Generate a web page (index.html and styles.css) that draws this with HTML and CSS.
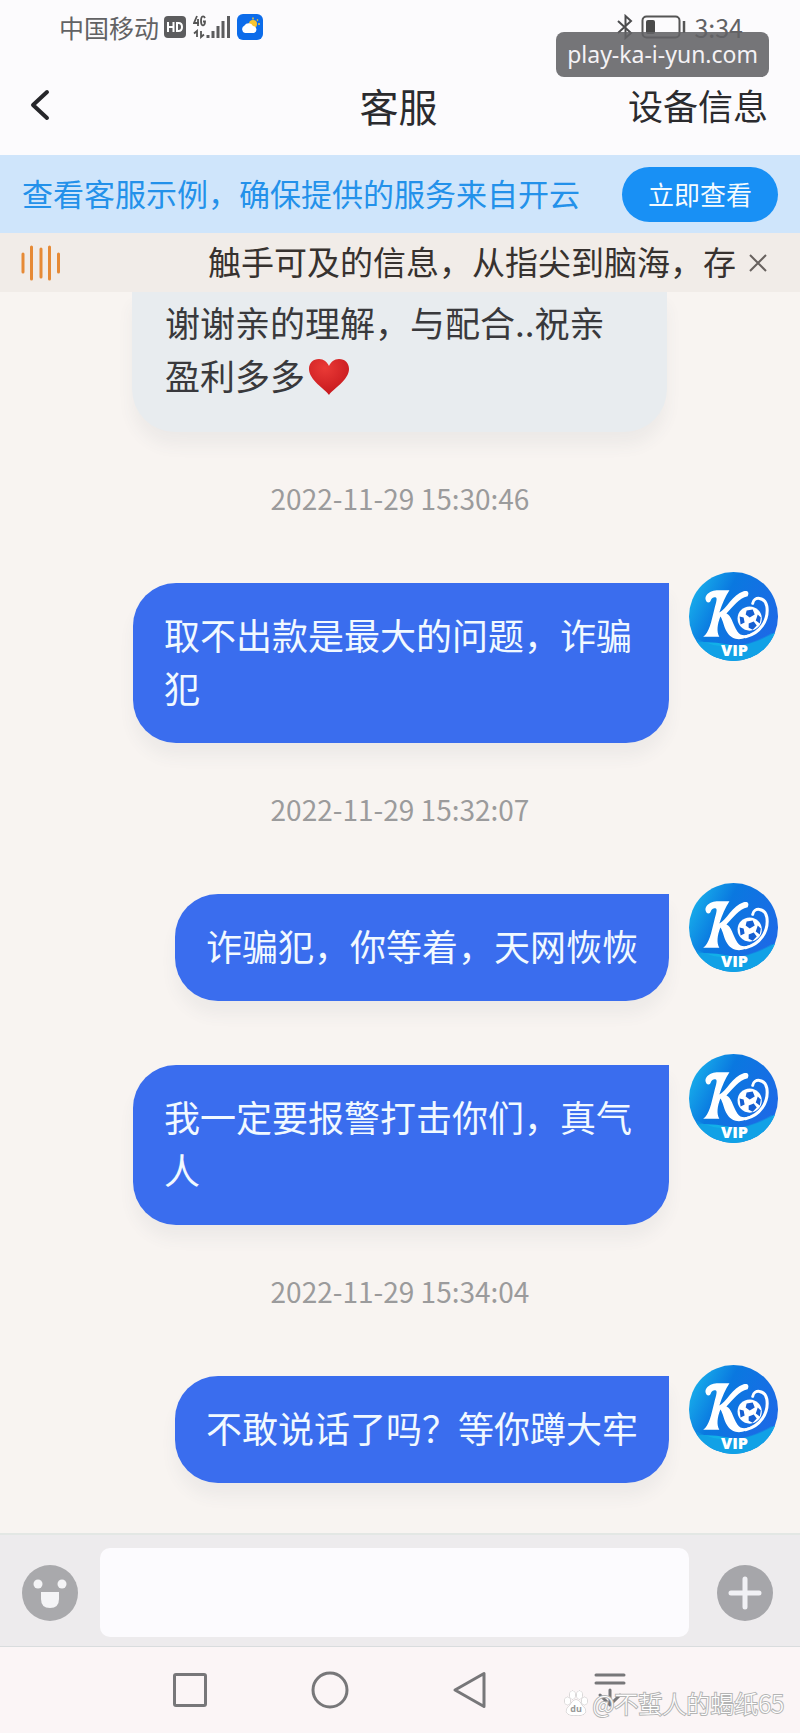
FILE: index.html
```html
<!DOCTYPE html>
<html lang="zh-CN">
<head>
<meta charset="utf-8">
<meta name="viewport" content="width=device-width, initial-scale=1">
<title>客服</title>
<link rel="stylesheet" href="styles.css">
</head>
<body>
<svg class="defs" aria-hidden="true">
  <defs>
    <linearGradient id="disc" x1="0" y1="0" x2="1" y2="0.5">
      <stop offset="0" stop-color="#1cc0ee"/>
      <stop offset="0.45" stop-color="#0a78e0"/>
      <stop offset="1" stop-color="#1c6ae6"/>
    </linearGradient>
    <radialGradient id="heart" cx="0.4" cy="0.25" r="0.8">
      <stop offset="0" stop-color="#ea3a36"/>
      <stop offset="1" stop-color="#c4161c"/>
    </radialGradient>
    <clipPath id="round"><circle cx="44" cy="44" r="44"/></clipPath>
    <symbol id="vip" viewBox="0 0 88 88">
      <g clip-path="url(#round)">
        <rect width="88" height="88" fill="url(#disc)"/>
        <path d="M0 70Q22 68 40 72T88 58V88H0Z" fill="#12b0e8"/>
        <path d="M8 66Q42 84 82 60L88 88H0Z" fill="#1098e4" opacity=".6"/>
      </g>
      <path d="M18 30C13 24 20 18 29 18H40C36 24 33 31 30 40C37 37 43 22 54 19C58 18 60 20 58 24C49 26 44 34 37 41C42 43 43 51 48 59C51 64 58 63 63 60C54 69 43 68 38 60C34 54 34 48 31 44C28 52 27 59 30 64H14C20 60 22 49 25 37C27 29 29 24 25 25C20 26 23 31 18 30Z" fill="#fff"/>
      <path d="M63 31C64 24 75 24 77 34C79 48 70 61 56 64" fill="none" stroke="#fff" stroke-width="3" stroke-linecap="round"/>
      <circle cx="60" cy="46" r="12" fill="#fff"/>
      <path d="M57 38l6-1 2 5-5 3-4-3zM50 44l4 1 1 5-4 2zM59 51l5-2 3 4-4 4-4-2zM68 42l3 3-1 6-4-3z" fill="#155fd2"/>
      <text class="vip-text" x="45" y="83" text-anchor="middle">VIP</text>
    </symbol>
  </defs>
</svg>

<div class="screen">
  <div class="status">
    <div class="status-group">
      <span>中国移动</span>
      <svg width="22" height="22" viewBox="0 0 22 22" role="img" aria-label="HD"><rect width="22" height="22" rx="4" fill="#5c5c5e"/><path d="M4 6v10M9.500 6v10M4 11h5.500M13 7v8h1.500q3.500 0 3.500-4t-3.500-4z" fill="none" stroke="#fff" stroke-width="2"/></svg>
      <svg class="signal" width="38" height="24" viewBox="0 0 38 24" role="img" aria-label="4G">
        <path d="M4 1L1 8H6M5 4V11M12 3Q11 1 9.500 1.500Q8 2 8 6T10 10.500Q12 10 12 6.500H10M4 22V16L1 18.500M8 16V22L11 19.500" fill="none" stroke="#555" stroke-width="1.800"/>
        <path d="M15 20v3M20 16v7M25 11v12M30 6v17M35.500 1v22" fill="none" stroke="#5c5c5e" stroke-width="3"/>
      </svg>
      <svg width="26" height="26" viewBox="0 0 26 26" role="img" aria-label="天气"><rect width="26" height="26" rx="6" fill="#0c6cea"/><circle cx="16" cy="10" r="4" fill="#f9c52e"/><path d="M16 3.500v2M21 5.500l-1 1M23 10h-2" stroke="#f9c52e" stroke-width="1.500"/><path d="M8 19a4 4 0 0 1-.5-7.500 4.800 4.800 0 0 1 8.500.5 3.600 3.600 0 0 1 1 7z" fill="#fff"/></svg>
    </div>
    <div class="status-group status-right">
      <svg width="16" height="26" viewBox="0 0 16 26" role="img" aria-label="蓝牙"><path d="M1 7L14 19L8.500 24V2L14 7L1 19" fill="none" stroke="#4c4c4e" stroke-width="2"/></svg>
      <svg width="45" height="24" viewBox="0 0 45 24" role="img" aria-label="电量"><rect x="1.500" y="1.500" width="37" height="21" rx="4" fill="none" stroke="#555" stroke-width="2"/><rect x="5" y="5" width="9" height="14" rx="2" fill="#4a4a4a"/><path d="M43 6v12" stroke="#555" stroke-width="2.500"/></svg>
      <time>3:34</time>
    </div>
    <div class="site-tag">play-ka-i-yun.com</div>
  </div>

  <header class="titlebar">
    <button class="plain back" aria-label="返回"><svg width="22" height="34" viewBox="0 0 22 34"><path d="M18 4L4 17L18 30" fill="none" stroke="#26262a" stroke-width="4" stroke-linecap="round" stroke-linejoin="round"/></svg></button>
    <h1>客服</h1>
    <a class="device" href="#device">设备信息</a>
  </header>

  <section class="promo">
    <p>查看客服示例，确保提供的服务来自开云</p>
    <button class="promo-button">立即查看</button>
  </section>

  <section class="notice">
    <svg width="40" height="36" viewBox="0 0 40 36" aria-hidden="true"><path d="M2 9v18M10.500 2v32M20 4v28M28.500 2v32M37.500 9v18" fill="none" stroke="#e68a36" stroke-width="3" stroke-linecap="round"/></svg>
    <p>触手可及的信息，从指尖到脑海，存</p>
    <button class="plain" aria-label="关闭"><svg width="20" height="20" viewBox="0 0 20 20"><path d="M2 2l16 16M18 2L2 18" stroke="#68625f" stroke-width="2"/></svg></button>
  </section>

  <main class="chat">
    <div class="bubble received">谢谢亲的理解，与配合..祝亲盈利多多<svg class="heart" width="42" height="38" viewBox="0 0 42 38" role="img" aria-label="爱心"><path d="M21 37C17 31 1 22 1 11C1 5 5 1 11 1C16 1 19 4 21 8C23 4 26 1 31 1C37 1 41 5 41 11C41 22 25 31 21 37Z" fill="url(#heart)"/></svg></div>
    <time class="stamp">2022-11-29 15:30:46</time>
    <div class="message"><div class="bubble">取不出款是最大的问题，诈骗犯</div><svg class="avatar" role="img" aria-label="VIP"><use href="#vip"/></svg></div>
    <time class="stamp">2022-11-29 15:32:07</time>
    <div class="message"><div class="bubble">诈骗犯，你等着，天网恢恢</div><svg class="avatar" role="img" aria-label="VIP"><use href="#vip"/></svg></div>
    <div class="message"><div class="bubble">我一定要报警打击你们，真气人</div><svg class="avatar" role="img" aria-label="VIP"><use href="#vip"/></svg></div>
    <time class="stamp">2022-11-29 15:34:04</time>
    <div class="message"><div class="bubble">不敢说话了吗？等你蹲大牢</div><svg class="avatar" role="img" aria-label="VIP"><use href="#vip"/></svg></div>
  </main>

  <form class="composer">
    <button class="plain" type="button" aria-label="表情"><svg width="56" height="56" viewBox="0 0 56 56"><circle cx="28" cy="28" r="28" fill="#a9a9ac"/><circle cx="16" cy="19" r="4.500" fill="#f4f4f6"/><circle cx="40" cy="19" r="4.500" fill="#f4f4f6"/><path d="M19 27H37V34Q37 43 28 43T19 34Z" fill="#f4f4f6"/></svg></button>
    <input type="text" aria-label="输入消息">
    <button class="plain" type="button" aria-label="更多"><svg width="56" height="56" viewBox="0 0 56 56"><circle cx="28" cy="28" r="28" fill="#a6a6aa"/><path d="M28 14v28M14 28h28" stroke="#f1f1f5" stroke-width="5" stroke-linecap="round"/></svg></button>
  </form>

  <nav class="system">
    <button class="plain" aria-label="最近任务"><svg width="40" height="40" viewBox="0 0 40 40"><rect x="4.500" y="4.500" width="31" height="31" rx="1.500"/></svg></button>
    <button class="plain" aria-label="主页"><svg width="40" height="40" viewBox="0 0 40 40"><circle cx="20" cy="20" r="17"/></svg></button>
    <button class="plain" aria-label="后退"><svg width="40" height="40" viewBox="0 0 40 40"><path d="M34 3.500V36.500L5 20Z"/></svg></button>
    <button class="plain" aria-label="通知"><svg width="40" height="40" viewBox="0 0 40 40"><path d="M6 5H34M6 13H34M20 20V35M10 25L20 35L30 25"/></svg></button>
    <div class="watermark">
      <svg width="24" height="26" viewBox="0 0 24 26" role="img" aria-label="百度"><g fill="#fff" stroke="#bbb"><ellipse cx="3.500" cy="11" rx="2.800" ry="3.800"/><ellipse cx="8.500" cy="5" rx="2.800" ry="4"/><ellipse cx="15.500" cy="5" rx="2.800" ry="4"/><ellipse cx="20.500" cy="11" rx="2.800" ry="3.800"/><path d="M12 10C8 10 7 15 3.500 18C0 23 5 26 12 25C19 26 24 23 20.500 18C17 15 16 10 12 10Z"/></g><text class="du" x="12" y="22" text-anchor="middle">du</text></svg>
      <span>@不蜇人的蝎纸65</span>
    </div>
  </nav>
</div>
</body>
</html>
```

FILE: styles.css
```css
* {
  box-sizing: border-box;
}

body {
  margin: 0;
  background: #f8f4f1;
  color: #2b2b2e;
  font-family: "Noto Sans CJK SC", sans-serif;
}

h1,
p {
  margin: 0;
  font-weight: 400;
}

.defs {
  position: absolute;
  width: 0;
  height: 0;
}

.plain {
  display: flex;
  flex: none;
  padding: 0;
  border: 0;
  background: none;
}

.screen {
  display: flex;
  flex-direction: column;
  min-height: 100vh;
}

.status {
  position: relative;
  display: flex;
  align-items: center;
  justify-content: space-between;
  height: 54px;
  padding: 0 57px 0 59px;
  background: #fcfbfd;
  color: #626264;
  font-size: 25px;
  line-height: 36px;
}

.status-group {
  display: flex;
  align-items: center;
  gap: 5px;
}

.status-right {
  gap: 8px;
}

.signal {
  margin: 0 1px 0 2px;
}

.site-tag {
  position: absolute;
  top: 32px;
  right: 31px;
  padding: 0 11px;
  border-radius: 8px;
  background: rgba(98, 98, 101, 0.88);
  color: #f4f2f5;
  font: 23px/45px "Noto Sans", sans-serif;
}

.titlebar {
  display: grid;
  grid-template-columns: 1fr auto 1fr;
  align-items: center;
  height: 101px;
  padding: 0 32px 0 29px;
  background: #fcfbfd;
}

.titlebar h1 {
  font-size: 39px;
  line-height: 60px;
}

.device {
  justify-self: end;
  color: inherit;
  font-size: 35px;
  text-decoration: none;
}

.promo {
  display: flex;
  align-items: center;
  justify-content: space-between;
  height: 78px;
  padding: 0 22px;
  background: #cfe5fb;
  color: #2391ea;
  font-size: 31px;
}

.promo p,
.notice p {
  padding-bottom: 3px;
}

.promo-button {
  flex: none;
  width: 156px;
  height: 55px;
  padding: 0;
  border: 0;
  border-radius: 28px;
  background: #1890f5;
  color: #f4fbff;
  font: 26px/40px "Noto Sans CJK SC", sans-serif;
}

.notice {
  display: flex;
  align-items: center;
  height: 59px;
  padding: 0 32px 0 21px;
  background: #f1ece8;
  color: #37322f;
  font-size: 33px;
}

.notice p {
  flex: 1;
  margin: 0 9px 0 147px;
  overflow: hidden;
  white-space: nowrap;
}

.chat {
  display: flex;
  flex: 1;
  flex-direction: column;
  padding: 0 22px 48px;
}

.bubble {
  max-width: 536px;
  padding: 25px 31px 29px;
  border-radius: 43px 0 43px 43px;
  background: #3a6dee;
  box-shadow: 0 14px 16px rgba(70, 90, 110, 0.06);
  color: #f1f9ff;
  font-size: 36px;
  line-height: 53px;
}

.received {
  align-self: flex-start;
  width: 535px;
  margin-left: 110px;
  padding: 3px 33px 31px;
  border-radius: 0 0 43px 43px;
  background: #e8ecef;
  color: #39393c;
  font-size: 35px;
}

.heart {
  margin-left: 3px;
  vertical-align: -6px;
}

.stamp {
  margin: 45px 0 53px;
  color: #9b9b9c;
  font-size: 28px;
  line-height: 42px;
  text-align: center;
}

.message {
  display: flex;
  align-items: flex-start;
  justify-content: flex-end;
  gap: 20px;
}

.message .bubble {
  margin-top: 11px;
}

.message + .message {
  margin-top: 53px;
}

.avatar {
  flex: none;
  width: 89px;
  height: 89px;
}

.vip-text {
  fill: #fff;
  font: 800 16px "Open Sans", sans-serif;
}

.composer {
  display: flex;
  align-items: center;
  gap: 22px;
  height: 114px;
  padding: 4px 27px 0 22px;
  border-top: 2px solid #e3e7e4;
  border-bottom: 1px solid #d9dcde;
  background: #edebed;
}

.composer input {
  flex: 1;
  min-width: 0;
  height: 89px;
  margin-right: 6px;
  padding: 0 20px;
  border: 0;
  border-radius: 10px;
  background: #fcfbfe;
  font: 36px "Noto Sans CJK SC", sans-serif;
}

.system {
  position: relative;
  display: flex;
  align-items: center;
  justify-content: center;
  gap: 100px;
  height: 86px;
  background: #fbf5f6;
}

.system > button svg {
  fill: none;
  stroke: #777779;
  stroke-width: 3;
  stroke-linejoin: round;
  stroke-linecap: round;
}

.watermark {
  position: absolute;
  right: 16px;
  bottom: 12px;
  display: flex;
  align-items: center;
  gap: 4px;
  color: #fff;
  font-size: 24px;
  font-weight: 300;
  line-height: 36px;
  -webkit-text-stroke: 2px #b4b4b4;
  paint-order: stroke fill;
}

.du {
  fill: #999;
  font: 700 9px "Open Sans", sans-serif;
  -webkit-text-stroke: 0;
}
```
